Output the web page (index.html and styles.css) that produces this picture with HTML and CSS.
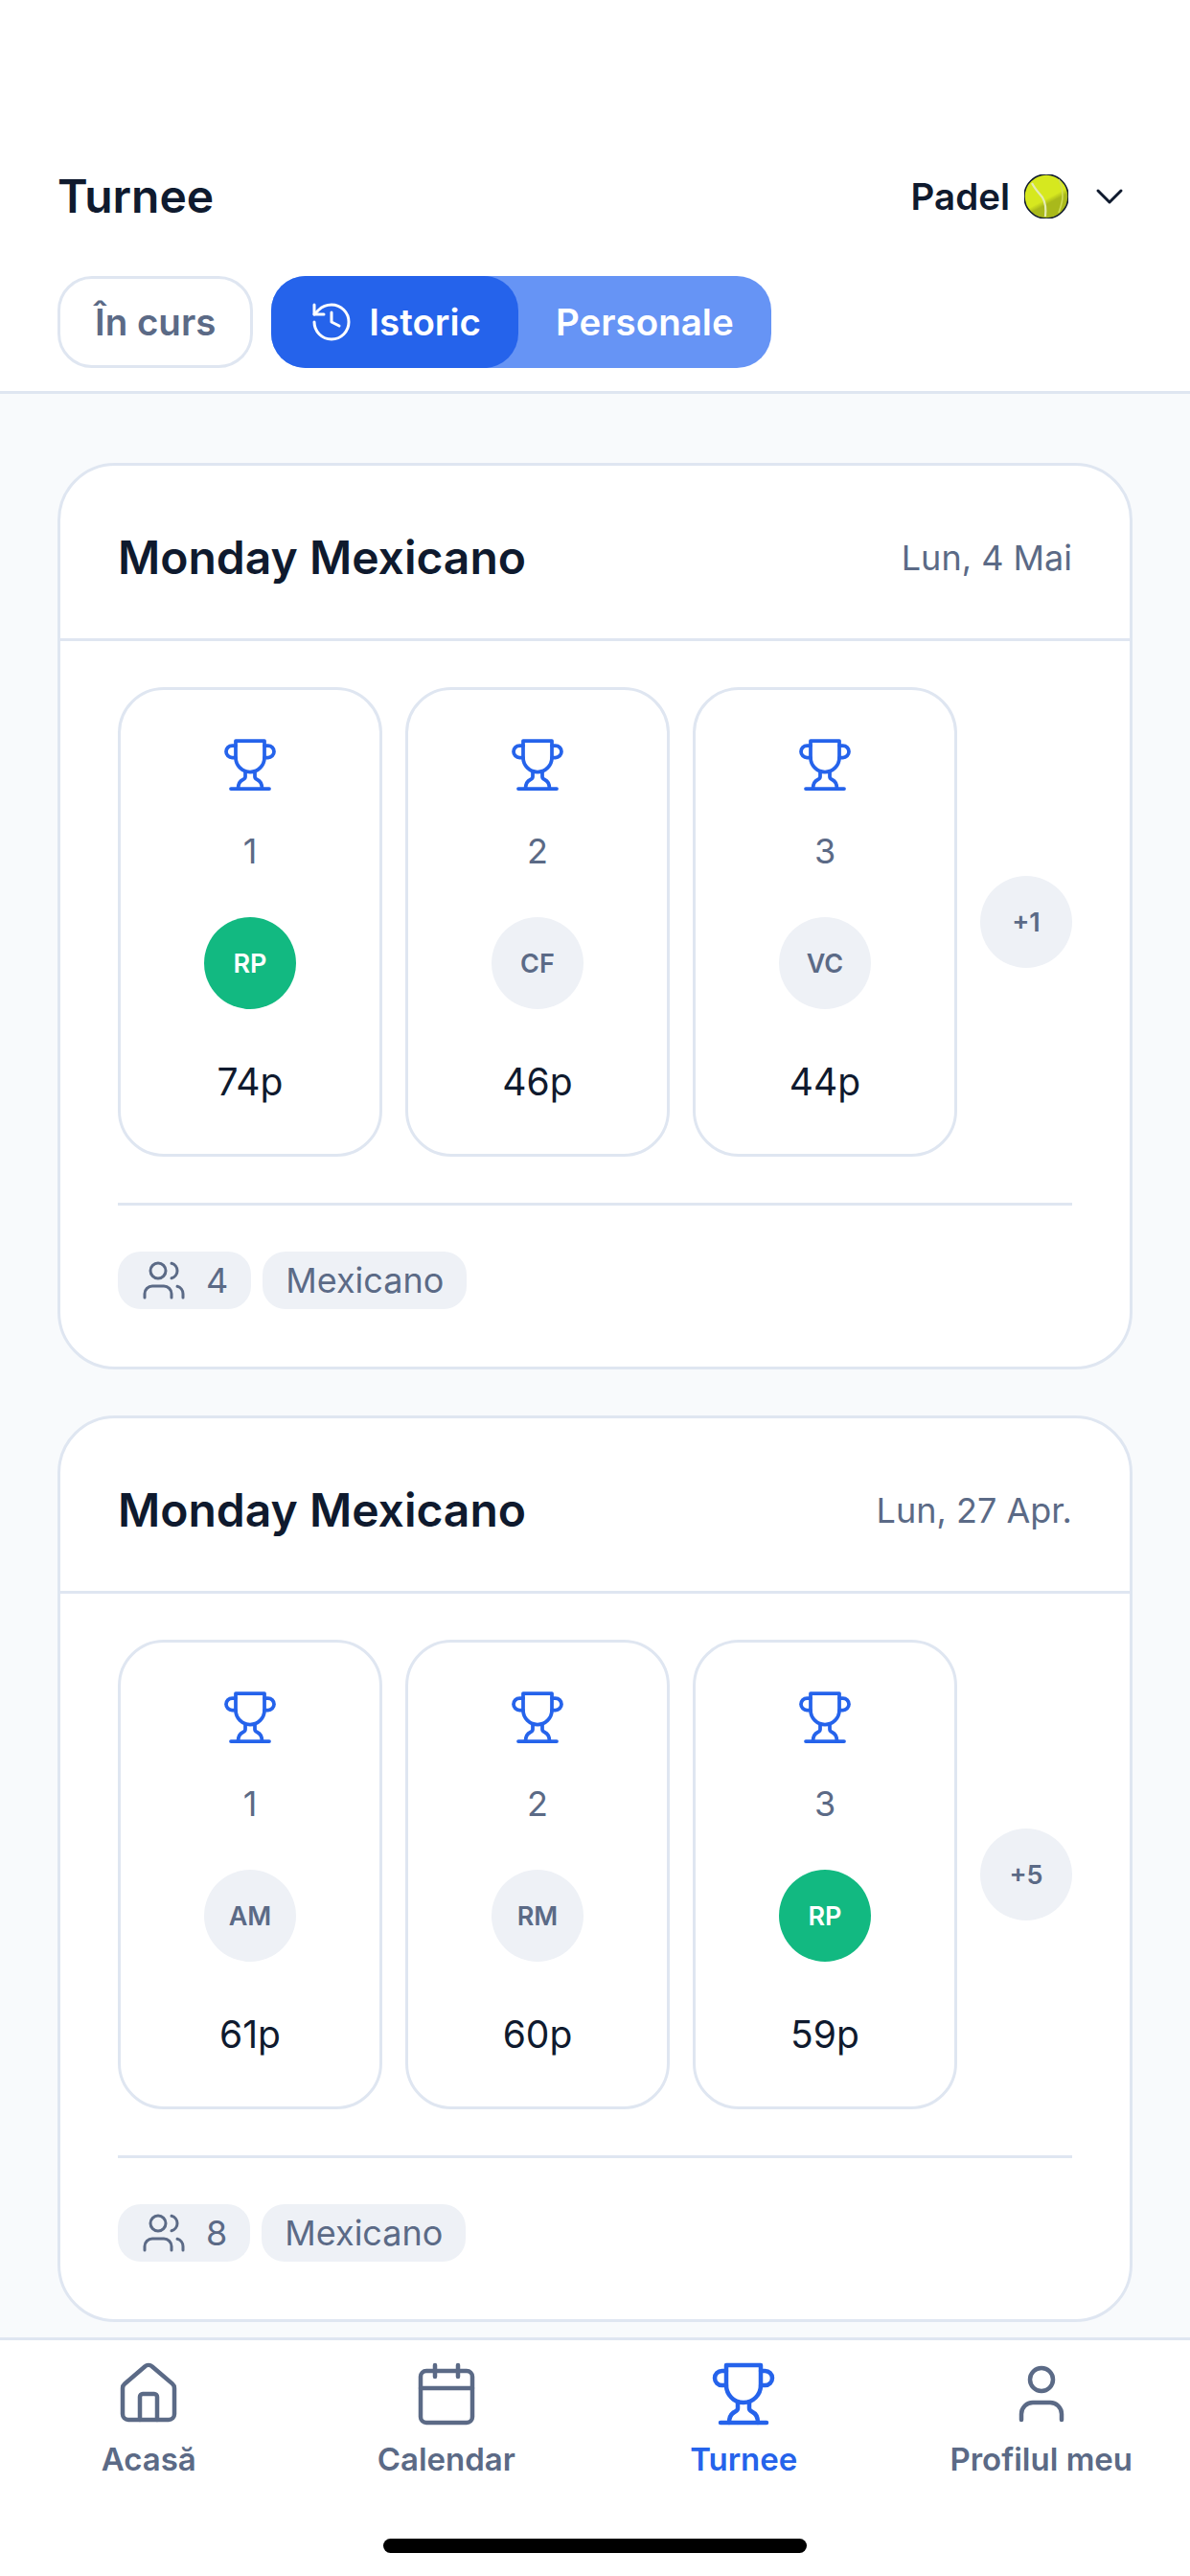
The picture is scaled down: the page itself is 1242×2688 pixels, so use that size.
FILE: index.html
```html
<!DOCTYPE html>
<html lang="ro">
<head>
    <meta charset="UTF-8">
    <meta name="viewport" content="width=device-width, initial-scale=1.0">
    <title>Turnee</title>
    <link rel="stylesheet" href="styles.css">
</head>
<body>
    <!-- Icon sprite -->
    <svg class="sprite" xmlns="http://www.w3.org/2000/svg">
        <symbol id="i-trophy" viewBox="0 0 24 24">
            <path d="M6 9H4.5a2.5 2.5 0 0 1 0-5H6"/>
            <path d="M18 9h1.5a2.5 2.5 0 0 0 0-5H18"/>
            <path d="M4 22h16"/>
            <path d="M10 14.66V17c0 .55-.47.98-.97 1.21C7.85 18.75 7 20.24 7 22"/>
            <path d="M14 14.66V17c0 .55.47.98.97 1.21C16.15 18.75 17 20.24 17 22"/>
            <path d="M18 2H6v7a6 6 0 0 0 12 0V2Z"/>
        </symbol>
        <symbol id="i-users" viewBox="0 0 24 24">
            <path d="M16 21v-2a4 4 0 0 0-4-4H6a4 4 0 0 0-4 4v2"/>
            <circle cx="9" cy="7" r="4"/>
            <path d="M22 21v-2a4 4 0 0 0-3-3.87"/>
            <path d="M16 3.13a4 4 0 0 1 0 7.75"/>
        </symbol>
    </svg>

    <div class="app">
        <header class="top">
            <div class="top-row">
                <h1 class="page-title">Turnee</h1>
                <div class="sport">
                    <span class="sport-name">Padel</span>
                    <svg class="ball" viewBox="0 0 46 46">
                        <defs>
                            <linearGradient id="ballFill" x1="0.25" y1="0.1" x2="0.7" y2="0.95">
                                <stop offset="0.54" stop-color="#d6e81f"/>
                                <stop offset="0.66" stop-color="#a9b91b"/>
                            </linearGradient>
                        </defs>
                        <circle cx="23" cy="23" r="23" fill="url(#ballFill)"/>
                        <path d="M8 9c3 6 7 10 11 15 3 5 4 11 3 20" fill="none" stroke="#e4ebb4" stroke-width="2.2"/>
                        <path d="M36 5c3 6 4 12 4 18 0 6-2 11-4 17" fill="none" stroke="#cfdc58" stroke-width="1.6"/>
                    </svg>
                    <svg class="chevron" viewBox="0 0 24 24"><path d="m6 9 6 6 6-6"/></svg>
                </div>
            </div>
            <div class="tabs">
                <button class="tab tab-outline">În curs</button>
                <div class="segment">
                    <button class="tab tab-active">
                        <svg class="tab-icon" viewBox="0 0 24 24">
                            <path d="M3 12a9 9 0 1 0 9-9 9.75 9.75 0 0 0-6.74 2.74L3 8"/>
                            <path d="M3 3v5h5"/>
                            <path d="M12 7v5l4 2"/>
                        </svg>
                        Istoric
                    </button>
                    <button class="tab tab-light">Personale</button>
                </div>
            </div>
        </header>

        <main class="content">
            <section class="card">
                <div class="card-head">
                    <h2 class="card-title">Monday Mexicano</h2>
                    <span class="card-date">Lun, 4 Mai</span>
                </div>
                <div class="card-body">
                    <div class="podium">
                        <div class="place">
                            <svg class="place-icon"><use href="#i-trophy"/></svg>
                            <span class="place-rank">1</span>
                            <span class="avatar avatar-me">RP</span>
                            <span class="place-score">74p</span>
                        </div>
                        <div class="place">
                            <svg class="place-icon"><use href="#i-trophy"/></svg>
                            <span class="place-rank">2</span>
                            <span class="avatar">CF</span>
                            <span class="place-score">46p</span>
                        </div>
                        <div class="place">
                            <svg class="place-icon"><use href="#i-trophy"/></svg>
                            <span class="place-rank">3</span>
                            <span class="avatar">VC</span>
                            <span class="place-score">44p</span>
                        </div>
                        <span class="avatar more">+1</span>
                    </div>
                    <div class="card-foot">
                        <span class="pill"><svg class="pill-icon"><use href="#i-users"/></svg>4</span>
                        <span class="pill">Mexicano</span>
                    </div>
                </div>
            </section>

            <section class="card">
                <div class="card-head">
                    <h2 class="card-title">Monday Mexicano</h2>
                    <span class="card-date">Lun, 27 Apr.</span>
                </div>
                <div class="card-body">
                    <div class="podium">
                        <div class="place">
                            <svg class="place-icon"><use href="#i-trophy"/></svg>
                            <span class="place-rank">1</span>
                            <span class="avatar">AM</span>
                            <span class="place-score">61p</span>
                        </div>
                        <div class="place">
                            <svg class="place-icon"><use href="#i-trophy"/></svg>
                            <span class="place-rank">2</span>
                            <span class="avatar">RM</span>
                            <span class="place-score">60p</span>
                        </div>
                        <div class="place">
                            <svg class="place-icon"><use href="#i-trophy"/></svg>
                            <span class="place-rank">3</span>
                            <span class="avatar avatar-me">RP</span>
                            <span class="place-score">59p</span>
                        </div>
                        <span class="avatar more">+5</span>
                    </div>
                    <div class="card-foot">
                        <span class="pill"><svg class="pill-icon"><use href="#i-users"/></svg>8</span>
                        <span class="pill">Mexicano</span>
                    </div>
                </div>
            </section>
        </main>

        <nav class="nav">
            <div class="nav-items">
                <a class="nav-item">
                    <svg class="nav-icon" viewBox="0 0 24 24">
                        <path d="M15 21v-8a1 1 0 0 0-1-1h-4a1 1 0 0 0-1 1v8"/>
                        <path d="M3 10a2 2 0 0 1 .709-1.528l7-5.999a2 2 0 0 1 2.582 0l7 5.999A2 2 0 0 1 21 10v9a2 2 0 0 1-2 2H5a2 2 0 0 1-2-2z"/>
                    </svg>
                    Acasă
                </a>
                <a class="nav-item">
                    <svg class="nav-icon" viewBox="0 0 24 24">
                        <path d="M8 2v4"/>
                        <path d="M16 2v4"/>
                        <rect x="3" y="4" width="18" height="18" rx="2"/>
                        <path d="M3 10h18"/>
                    </svg>
                    Calendar
                </a>
                <a class="nav-item nav-item-active">
                    <svg class="nav-icon"><use href="#i-trophy"/></svg>
                    Turnee
                </a>
                <a class="nav-item">
                    <svg class="nav-icon" viewBox="0 0 24 24">
                        <path d="M19 21v-2a4 4 0 0 0-4-4H9a4 4 0 0 0-4 4v2"/>
                        <circle cx="12" cy="7" r="4"/>
                    </svg>
                    Profilul meu
                </a>
            </div>
            <div class="home-bar"></div>
        </nav>
    </div>
</body>
</html>
```

FILE: styles.css
```css
* {
    box-sizing: border-box;
}

body {
    margin: 0;
    font-family: Inter, "Noto Sans", sans-serif;
    color: #0f1a2e;
    background-color: #fff;
}

svg {
    fill: none;
    stroke: currentColor;
    stroke-width: 1.5;
    stroke-linecap: round;
    stroke-linejoin: round;
    flex: none;
}

.sprite {
    display: none;
}

.app {
    display: flex;
    flex-direction: column;
    height: 2688px;
    overflow: hidden;
}

/* Top bar */
.top {
    flex: none;
    padding: 168px 60px 24px;
    border-bottom: 3px solid #dfe6f1;
}

.top-row {
    display: flex;
    align-items: center;
    justify-content: space-between;
    height: 72px;
    margin-bottom: 48px;
}

.page-title {
    margin: 0;
    font-size: 48px;
    font-weight: 600;
}

.sport {
    display: flex;
    align-items: center;
    margin-top: 2px;
}

.sport-name {
    font-size: 38.5px;
    font-weight: 600;
}

.ball {
    width: 46px;
    height: 46px;
    margin-left: 15px;
    stroke-linecap: butt;
}

.chevron {
    width: 48px;
    height: 48px;
    margin-left: 19px;
}

.tabs {
    display: flex;
    gap: 19px;
}

.tab {
    display: flex;
    align-items: center;
    height: 96px;
    padding: 0 39px;
    border: none;
    border-radius: 36px;
    font-family: inherit;
    font-size: 38.5px;
    font-weight: 600;
    color: #fff;
    background: none;
}

.tab-outline {
    padding: 0 36px;
    border: 3px solid #dfe6f1;
    color: #5b6a86;
    background-color: #fff;
}

.segment {
    display: flex;
    border-radius: 36px;
    background-color: #6694f5;
}

.tab-active {
    background-color: #2563eb;
}

.tab-icon {
    width: 48px;
    height: 48px;
    margin-right: 15px;
}

/* Tournament cards */
.content {
    flex: 1;
    min-height: 0;
    overflow: hidden;
    padding: 72px 60px 0;
    background-color: #f8fafc;
}

.card {
    margin-bottom: 48px;
    background-color: #fff;
    border: 3px solid #dfe6f1;
    border-radius: 60px;
}

.card-head {
    display: flex;
    align-items: center;
    justify-content: space-between;
    padding: 60px 60px 48px;
    border-bottom: 3px solid #dfe6f1;
}

.card-title {
    margin: 0;
    font-size: 48px;
    line-height: 72px;
    font-weight: 600;
}

.card-date {
    font-size: 36px;
    color: #5b6a86;
}

.card-body {
    padding: 48px 60px 60px;
}

.podium {
    display: flex;
    align-items: center;
    gap: 24px;
    padding-bottom: 48px;
    border-bottom: 3px solid #dfe6f1;
}

.place {
    flex: 1;
    display: flex;
    flex-direction: column;
    align-items: center;
    padding: 48px 0;
    border: 3px solid #dfe6f1;
    border-radius: 48px;
}

.place-icon {
    width: 60px;
    height: 60px;
    color: #2563eb;
}

.place-rank {
    margin-top: 33px;
    font-size: 36px;
    line-height: 54px;
    color: #5b6a86;
}

.place-score {
    margin-top: 49px;
    font-size: 39px;
    line-height: 54px;
}

.avatar {
    flex: none;
    display: flex;
    align-items: center;
    justify-content: center;
    width: 96px;
    height: 96px;
    margin-top: 42px;
    border-radius: 50%;
    font-size: 27px;
    font-weight: 600;
    color: #5b6a86;
    background-color: #eef1f6;
}

.avatar-me {
    color: #fff;
    background-color: #12b981;
}

.more {
    margin-top: 0;
}

.card-foot {
    display: flex;
    gap: 12px;
    margin-top: 48px;
}

.pill {
    display: flex;
    align-items: center;
    height: 60px;
    padding: 0 24px;
    border-radius: 24px;
    font-size: 36px;
    color: #5b6a86;
    background-color: #eef1f6;
}

.pill-icon {
    width: 48px;
    height: 48px;
    margin-right: 20px;
}

/* Bottom navigation */
.nav {
    flex: none;
    height: 249px;
    padding-top: 20px;
    border-top: 3px solid #dfe6f1;
    background-color: #fff;
}

.nav-items {
    display: grid;
    grid-template-columns: repeat(4, 1fr);
}

.nav-item {
    display: flex;
    flex-direction: column;
    align-items: center;
    font-size: 33px;
    line-height: 48px;
    font-weight: 600;
    color: #5b6a86;
}

.nav-item-active {
    color: #2563eb;
}

.nav-icon {
    width: 72px;
    height: 72px;
    margin-bottom: 8px;
}

.home-bar {
    width: 442px;
    height: 15px;
    margin: 59px auto 0;
    border-radius: 8px;
    background-color: #000;
}
```
